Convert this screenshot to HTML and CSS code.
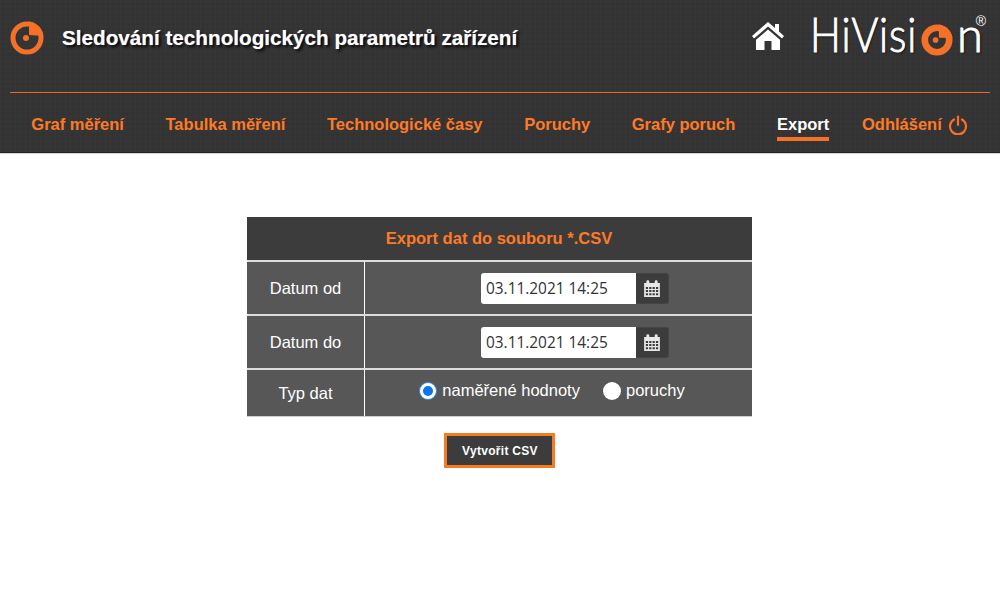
FILE: index.html
```html
<!DOCTYPE html>
<html lang="cs">
<head>
    <meta charset="UTF-8">
    <meta name="viewport" content="width=device-width, initial-scale=1.0">
    <title>Sledování technologických parametrů zařízení</title>
    <link rel="stylesheet" href="styles.css">
</head>
<body>
    <header class="site-header">
        <div class="top-row">
            <div class="title-block">
                <svg class="title-icon" viewBox="0 0 34 34" width="34" height="34">
                    <circle cx="17" cy="17" r="14" fill="none" stroke="#f5712a" stroke-width="5"/>
                    <path d="M19 0.600 A16.500 16.500 0 0 1 33.400 15 L19 14 Z" fill="#f5712a"/>
                    <circle cx="16" cy="17" r="3" fill="#f5712a"/>
                </svg>
                <h1>Sledování technologických parametrů zařízení</h1>
            </div>
            <div class="brand">
                <svg class="home-icon" viewBox="0 0 34 30" width="34" height="30">
                    <path d="M17 1 L24 7 V3 H28 V10.500 L33 15 L31 17.500 L17 5.500 L3 17.500 L1 15 Z" fill="#fff"/>
                    <path d="M17 8.500 L29 18.800 V29 H20.500 V20 H13.500 V29 H5 V18.800 Z" fill="#fff"/>
                </svg>
                <div class="logo">
                    <span class="logo-text logo-start">HiVisi</span>
                    <svg class="logo-eye" viewBox="0 0 34 34" width="32" height="32">
                        <circle cx="17" cy="17" r="13" fill="none" stroke="#f5712a" stroke-width="7"/>
                        <path d="M19 0.500 A16.500 16.500 0 0 1 33.400 15 L19 14.500 Z" fill="#f5712a"/>
                        <circle cx="15.500" cy="17" r="3" fill="#f5712a"/>
                    </svg>
                    <span class="logo-text logo-end">n</span>
                    <span class="logo-reg">®</span>
                </div>
            </div>
        </div>
        <nav class="main-nav">
            <a href="#">Graf měření</a>
            <a href="#">Tabulka měření</a>
            <a href="#">Technologické časy</a>
            <a href="#">Poruchy</a>
            <a href="#">Grafy poruch</a>
            <a href="#" class="active">Export</a>
            <a href="#" class="logout">Odhlášení
                <svg viewBox="0 0 20 20" width="20" height="20">
                    <path d="M6 4.500 A8 8 0 1 0 14 4.500" fill="none" stroke="#f5712a" stroke-width="2.200" stroke-linecap="round"/>
                    <path d="M10 1.500 V10" fill="none" stroke="#f5712a" stroke-width="2.200" stroke-linecap="round"/>
                </svg>
            </a>
        </nav>
    </header>

    <main class="content">
        <table class="export-table">
            <tr>
                <th colspan="2">Export dat do souboru *.CSV</th>
            </tr>
            <tr>
                <td class="label">Datum od</td>
                <td>
                    <div class="date-field">
                        <input type="text" value="03.11.2021 14:25">
                        <span class="date-button">
                            <svg viewBox="0 0 16 16" width="18" height="18">
                                <path d="M1 3.500 H15 V16 H1 Z M2.500 7 V8.800 H4.500 V7 Z M5.500 7 V8.800 H7.500 V7 Z M8.500 7 V8.800 H10.500 V7 Z M11.500 7 V8.800 H13.500 V7 Z M2.500 9.800 V11.600 H4.500 V9.800 Z M5.500 9.800 V11.600 H7.500 V9.800 Z M8.500 9.800 V11.600 H10.500 V9.800 Z M11.500 9.800 V11.600 H13.500 V9.800 Z M2.500 12.600 V14.500 H4.500 V12.600 Z M5.500 12.600 V14.500 H7.500 V12.600 Z M8.500 12.600 V14.500 H10.500 V12.600 Z M11.500 12.600 V14.500 H13.500 V12.600 Z" fill="#e8e8e8" fill-rule="evenodd"/>
                                <path d="M3 5 V2.500 A1.300 1.300 0 0 1 5.600 2.500 V5 Z M10.400 5 V2.500 A1.300 1.300 0 0 1 13 2.500 V5 Z" fill="#e8e8e8"/>
                            </svg>
                        </span>
                    </div>
                </td>
            </tr>
            <tr>
                <td class="label">Datum do</td>
                <td>
                    <div class="date-field">
                        <input type="text" value="03.11.2021 14:25">
                        <span class="date-button">
                            <svg viewBox="0 0 16 16" width="18" height="18">
                                <path d="M1 3.500 H15 V16 H1 Z M2.500 7 V8.800 H4.500 V7 Z M5.500 7 V8.800 H7.500 V7 Z M8.500 7 V8.800 H10.500 V7 Z M11.500 7 V8.800 H13.500 V7 Z M2.500 9.800 V11.600 H4.500 V9.800 Z M5.500 9.800 V11.600 H7.500 V9.800 Z M8.500 9.800 V11.600 H10.500 V9.800 Z M11.500 9.800 V11.600 H13.500 V9.800 Z M2.500 12.600 V14.500 H4.500 V12.600 Z M5.500 12.600 V14.500 H7.500 V12.600 Z M8.500 12.600 V14.500 H10.500 V12.600 Z M11.500 12.600 V14.500 H13.500 V12.600 Z" fill="#e8e8e8" fill-rule="evenodd"/>
                                <path d="M3 5 V2.500 A1.300 1.300 0 0 1 5.600 2.500 V5 Z M10.400 5 V2.500 A1.300 1.300 0 0 1 13 2.500 V5 Z" fill="#e8e8e8"/>
                            </svg>
                        </span>
                    </div>
                </td>
            </tr>
            <tr>
                <td class="label">Typ dat</td>
                <td>
                    <div class="radio-row">
                        <label class="radio-item"><span class="radio checked"></span>naměřené hodnoty</label>
                        <label class="radio-item"><span class="radio"></span>poruchy</label>
                    </div>
                </td>
            </tr>
        </table>
        <button class="csv-button">Vytvořit CSV</button>
    </main>
</body>
</html>
```

FILE: styles.css
```css
body {
    margin: 0;
    background-color: #fff;
    color: #fff;
    font-family: "Liberation Sans", Arial, sans-serif;
}

.site-header {
    height: 153px;
    padding: 0 10px;
    box-sizing: border-box;
    background-color: #333;
    background-image:
        repeating-linear-gradient(0deg, rgba(255, 255, 255, 0.015) 0 1px, transparent 1px 5px),
        repeating-linear-gradient(90deg, rgba(255, 255, 255, 0.015) 0 1px, transparent 1px 5px);
    border-bottom: 1px solid #222;
    box-shadow: 0 1px 1px rgba(0, 0, 0, 0.15);
}

.top-row {
    height: 93px;
    box-sizing: border-box;
    display: flex;
    justify-content: space-between;
    align-items: flex-start;
    border-bottom: 1px solid #e06a28;
}

.title-block {
    display: flex;
    align-items: center;
    margin-top: 21px;
}

.title-icon {
    display: block;
}

.title-block h1 {
    margin: 0 0 0 18px;
    font-size: 20.700px;
    font-weight: bold;
    color: #fff;
    text-shadow: 0 0 1px rgba(255, 255, 255, 0.5), 2px 2px 3px #000;
}

.brand {
    display: flex;
    align-items: flex-start;
    margin-top: 11px;
}

.home-icon {
    margin: 10px 28px 0 0;
}

.logo {
    position: relative;
    display: flex;
    align-items: flex-start;
    width: 177px;
    height: 46px;
}

.logo-text {
    font-family: Lato, sans-serif;
    font-weight: 300;
    font-size: 47px;
    line-height: 46px;
    color: #fff;
    -webkit-text-stroke: 1px #fff;
    text-shadow: 1px 1px 2px #000;
    transform-origin: left center;
}

.logo-start {
    width: 111px;
    margin-left: -3px;
    letter-spacing: 1px;
    transform: scaleX(0.87);
}

.logo-end {
    width: 27px;
    margin-left: 2px;
}

.logo-eye {
    margin: 13px 2px 0 0;
}

.logo-reg {
    position: absolute;
    top: 3px;
    right: 4px;
    font-size: 14px;
    line-height: 14px;
}

.main-nav {
    display: flex;
    align-items: center;
    height: 59px;
    padding: 2px 0 0 0.500px;
}

.main-nav a {
    padding: 0 20.800px;
    font-size: 16.500px;
    font-weight: bold;
    color: #ff7a26;
    text-decoration: none;
}

.main-nav a.active {
    position: relative;
    color: #fff;
}

.main-nav a.active::after {
    content: "";
    position: absolute;
    left: 20.800px;
    right: 20.800px;
    bottom: -7px;
    height: 4px;
    background-color: #f5712a;
}

.main-nav a.logout {
    display: flex;
    align-items: center;
    gap: 6px;
    padding: 0 0 0 12px;
}

.content {
    display: flex;
    flex-direction: column;
    align-items: center;
    padding: 64px 2px 0 0;
}

.export-table {
    width: 505px;
    border-collapse: collapse;
    background-color: #575757;
    font-size: 16.500px;
}

.export-table th {
    height: 43px;
    padding: 0;
    background-color: #3c3c3c;
    color: #ff7a26;
    font-size: 16.500px;
}

.export-table td {
    padding: 0;
    border-top: 2px solid #ddd;
    border-left: 1px solid #fff;
    text-align: center;
    height: 52px;
}

.export-table td.label {
    width: 116px;
    padding-left: 1px;
    border-left: none;
}

.export-table tr:last-child td {
    height: 46px;
    border-bottom: 1px solid #ccc;
}

.date-field {
    display: flex;
    width: 188px;
    margin: 0 auto;
    padding-left: 34px;
}

.date-field input {
    width: 155px;
    height: 31px;
    box-sizing: border-box;
    padding: 0 5px;
    border: none;
    border-radius: 3px 0 0 3px;
    background: #fff;
    color: #333;
    font-family: "Open Sans", sans-serif;
    font-size: 15.400px;
}

.date-button {
    display: flex;
    align-items: center;
    justify-content: center;
    width: 33px;
    height: 31px;
    box-sizing: border-box;
    border: 1px solid #444;
    border-left: none;
    border-radius: 0 3px 3px 0;
    background-color: #3c3c3c;
}

.radio-row {
    display: flex;
    justify-content: center;
    gap: 23px;
    margin-top: -5px;
    padding-right: 12px;
}

.radio-item {
    display: flex;
    align-items: center;
    gap: 5px;
}

.radio {
    width: 18px;
    height: 18px;
    border-radius: 50%;
    background-color: #fff;
}

.radio.checked {
    box-sizing: border-box;
    width: 16px;
    height: 16px;
    margin: 0 1px;
    border: 3px solid #fff;
    background-color: #0a75f0;
    box-shadow: 0 0 0 1px #3d8fe8;
}

.csv-button {
    width: 111px;
    height: 35px;
    margin-top: 16px;
    padding: 0 0 0 2px;
    border: 3px solid #f57c20;
    background-color: #3c3c3c;
    color: #fff;
    font-family: "Liberation Sans", Arial, sans-serif;
    font-size: 12px;
    font-weight: bold;
    letter-spacing: 0.3px;
}
```
